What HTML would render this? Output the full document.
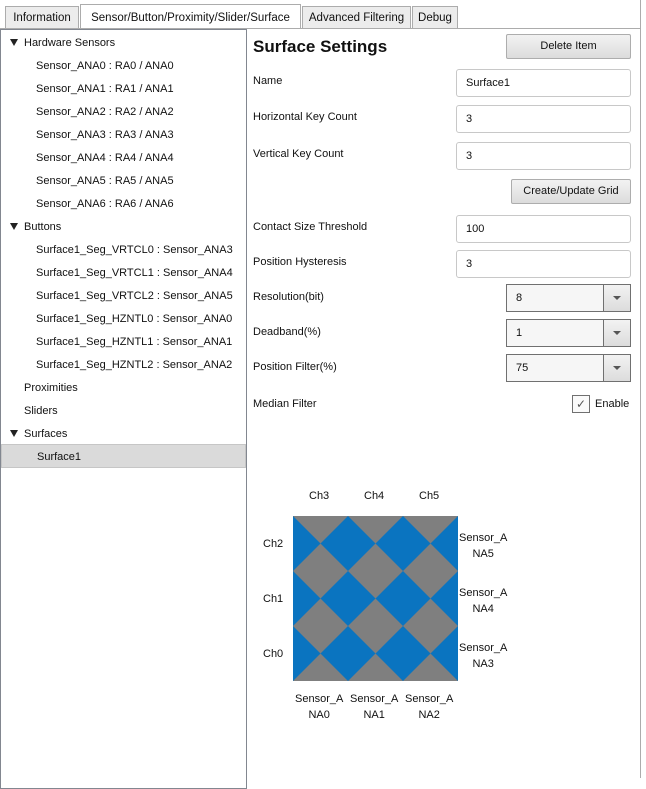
<!DOCTYPE html><html><head><style>
body{margin:0;width:646px;height:778px;position:relative;background:#fff;font-family:"Liberation Sans",sans-serif;font-size:11px;line-height:17px;color:#111;overflow:hidden}
.a{position:absolute;white-space:nowrap}
.tab{position:absolute;top:6px;height:22px;border:1px solid #acacac;border-bottom:none;background:#ececec;line-height:22px;text-align:center;font-size:11.5px;box-sizing:border-box}
.box{position:absolute;left:456px;width:175px;height:28px;border:1px solid #c8c8c8;border-radius:3px;box-sizing:border-box;padding-left:9px;line-height:26px;background:#fff}
.btn{position:absolute;border:1px solid #adadad;border-radius:2px;background:linear-gradient(#f2f2f2,#dcdcdc);text-align:center;box-sizing:border-box}
.cb{position:absolute;left:506px;width:125px;height:28px;border:1px solid #707070;box-sizing:border-box;background:#f6f6f6;line-height:26px;padding-left:9px}
.cb i{position:absolute;right:0;top:0;width:26px;height:26px;border-left:1px solid #707070;background:linear-gradient(#f2f2f2,#dcdcdc)}
.cb i:after{content:"";position:absolute;left:9px;top:11px;border:4px solid transparent;border-top:4px solid #555;border-bottom:none}
.t{position:absolute;left:36px;top:0}
.h{position:absolute;left:24px}
.tri{position:absolute;left:10px;border:4px solid transparent;border-top:7px solid #222;border-bottom:none}
.l{position:absolute;left:253px}
</style></head><body>
<div class="tab" style="left:5px;width:74px">Information</div>
<div class="tab" style="left:80px;top:4px;height:25px;width:221px;background:#fff;line-height:26px">Sensor/Button/Proximity/Slider/Surface</div>
<div class="tab" style="left:302px;width:109px">Advanced Filtering</div>
<div class="tab" style="left:412px;width:46px">Debug</div>
<div class="a" style="left:0;top:28px;width:640px;height:1px;background:#acacac"></div>
<div class="a" style="left:640px;top:0;width:1px;height:778px;background:#acacac"></div>
<div class="a" style="left:0;top:29px;width:247px;height:760px;border:1px solid #828790;box-sizing:border-box"></div>
<div class="tri" style="top:39px"></div><div class="h" style="top:35px">Hardware Sensors</div>
<div class="t" style="top:58px">Sensor_ANA0 : RA0 / ANA0</div>
<div class="t" style="top:81px">Sensor_ANA1 : RA1 / ANA1</div>
<div class="t" style="top:104px">Sensor_ANA2 : RA2 / ANA2</div>
<div class="t" style="top:127px">Sensor_ANA3 : RA3 / ANA3</div>
<div class="t" style="top:150px">Sensor_ANA4 : RA4 / ANA4</div>
<div class="t" style="top:173px">Sensor_ANA5 : RA5 / ANA5</div>
<div class="t" style="top:196px">Sensor_ANA6 : RA6 / ANA6</div>
<div class="tri" style="top:223px"></div><div class="h" style="top:219px">Buttons</div>
<div class="t" style="top:242px">Surface1_Seg_VRTCL0 : Sensor_ANA3</div>
<div class="t" style="top:265px">Surface1_Seg_VRTCL1 : Sensor_ANA4</div>
<div class="t" style="top:288px">Surface1_Seg_VRTCL2 : Sensor_ANA5</div>
<div class="t" style="top:311px">Surface1_Seg_HZNTL0 : Sensor_ANA0</div>
<div class="t" style="top:334px">Surface1_Seg_HZNTL1 : Sensor_ANA1</div>
<div class="t" style="top:357px">Surface1_Seg_HZNTL2 : Sensor_ANA2</div>
<div class="h" style="top:380px">Proximities</div>
<div class="h" style="top:403px">Sliders</div>
<div class="tri" style="top:430px"></div><div class="h" style="top:426px">Surfaces</div>
<div class="a" style="left:1px;top:444px;width:245px;height:24px;background:#dadada;border:1px solid #c6c6c6;box-sizing:border-box"></div>
<div class="t" style="top:449px;left:37px">Surface1</div>

<div class="a" style="left:253px;top:36px;font-size:17px;line-height:22px;font-weight:bold">Surface Settings</div>
<div class="btn" style="left:506px;top:34px;width:125px;height:25px;line-height:23px">Delete Item</div>
<div class="l a" style="top:73px">Name</div><div class="box" style="top:69px">Surface1</div>
<div class="l a" style="top:109px">Horizontal Key Count</div><div class="box" style="top:105px">3</div>
<div class="l a" style="top:146px">Vertical Key Count</div><div class="box" style="top:142px">3</div>
<div class="btn" style="left:511px;top:179px;width:120px;height:25px;line-height:23px">Create/Update Grid</div>
<div class="l a" style="top:219px">Contact Size Threshold</div><div class="box" style="top:215px">100</div>
<div class="l a" style="top:254px">Position Hysteresis</div><div class="box" style="top:250px">3</div>
<div class="l a" style="top:289px">Resolution(bit)</div><div class="cb" style="top:284px">8<i></i></div>
<div class="l a" style="top:324px">Deadband(%)</div><div class="cb" style="top:319px">1<i></i></div>
<div class="l a" style="top:359px">Position Filter(%)</div><div class="cb" style="top:354px">75<i></i></div>
<div class="l a" style="top:396px">Median Filter</div>
<div class="a" style="left:572px;top:395px;width:18px;height:18px;border:1px solid #707070;box-sizing:border-box;background:#fafafa;text-align:center;line-height:16px;color:#555;font-size:12px">✓</div>
<div class="a" style="left:595px;top:396px">Enable</div>

<div class="a" style="left:309px;top:488px">Ch3</div>
<div class="a" style="left:364px;top:488px">Ch4</div>
<div class="a" style="left:419px;top:488px">Ch5</div>
<div class="a" style="left:263px;top:536px">Ch2</div>
<div class="a" style="left:263px;top:591px">Ch1</div>
<div class="a" style="left:263px;top:646px">Ch0</div>
<svg class="a" style="left:293px;top:516px" width="165" height="165" viewBox="0 0 165 165">
<rect width="165" height="165" fill="#7f7f7f"/>
<g fill="#0a74c0">
<path d="M0 0L27.5 27.5L0 55L-27.5 27.5Z M55 0L82.5 27.5L55 55L27.5 27.5Z M110 0L137.5 27.5L110 55L82.5 27.5Z M165 0L192.5 27.5L165 55L137.5 27.5Z"/>
<path transform="translate(0,55)" d="M0 0L27.5 27.5L0 55L-27.5 27.5Z M55 0L82.5 27.5L55 55L27.5 27.5Z M110 0L137.5 27.5L110 55L82.5 27.5Z M165 0L192.5 27.5L165 55L137.5 27.5Z"/>
<path transform="translate(0,110)" d="M0 0L27.5 27.5L0 55L-27.5 27.5Z M55 0L82.5 27.5L55 55L27.5 27.5Z M110 0L137.5 27.5L110 55L82.5 27.5Z M165 0L192.5 27.5L165 55L137.5 27.5Z"/>
</g></svg>
<div class="a" style="left:459px;top:530px;line-height:16px;text-align:center">Sensor_A<br>NA5</div>
<div class="a" style="left:459px;top:585px;line-height:16px;text-align:center">Sensor_A<br>NA4</div>
<div class="a" style="left:459px;top:640px;line-height:16px;text-align:center">Sensor_A<br>NA3</div>
<div class="a" style="left:295px;top:691px;line-height:16px;text-align:center">Sensor_A<br>NA0</div>
<div class="a" style="left:350px;top:691px;line-height:16px;text-align:center">Sensor_A<br>NA1</div>
<div class="a" style="left:405px;top:691px;line-height:16px;text-align:center">Sensor_A<br>NA2</div>
</body></html>
